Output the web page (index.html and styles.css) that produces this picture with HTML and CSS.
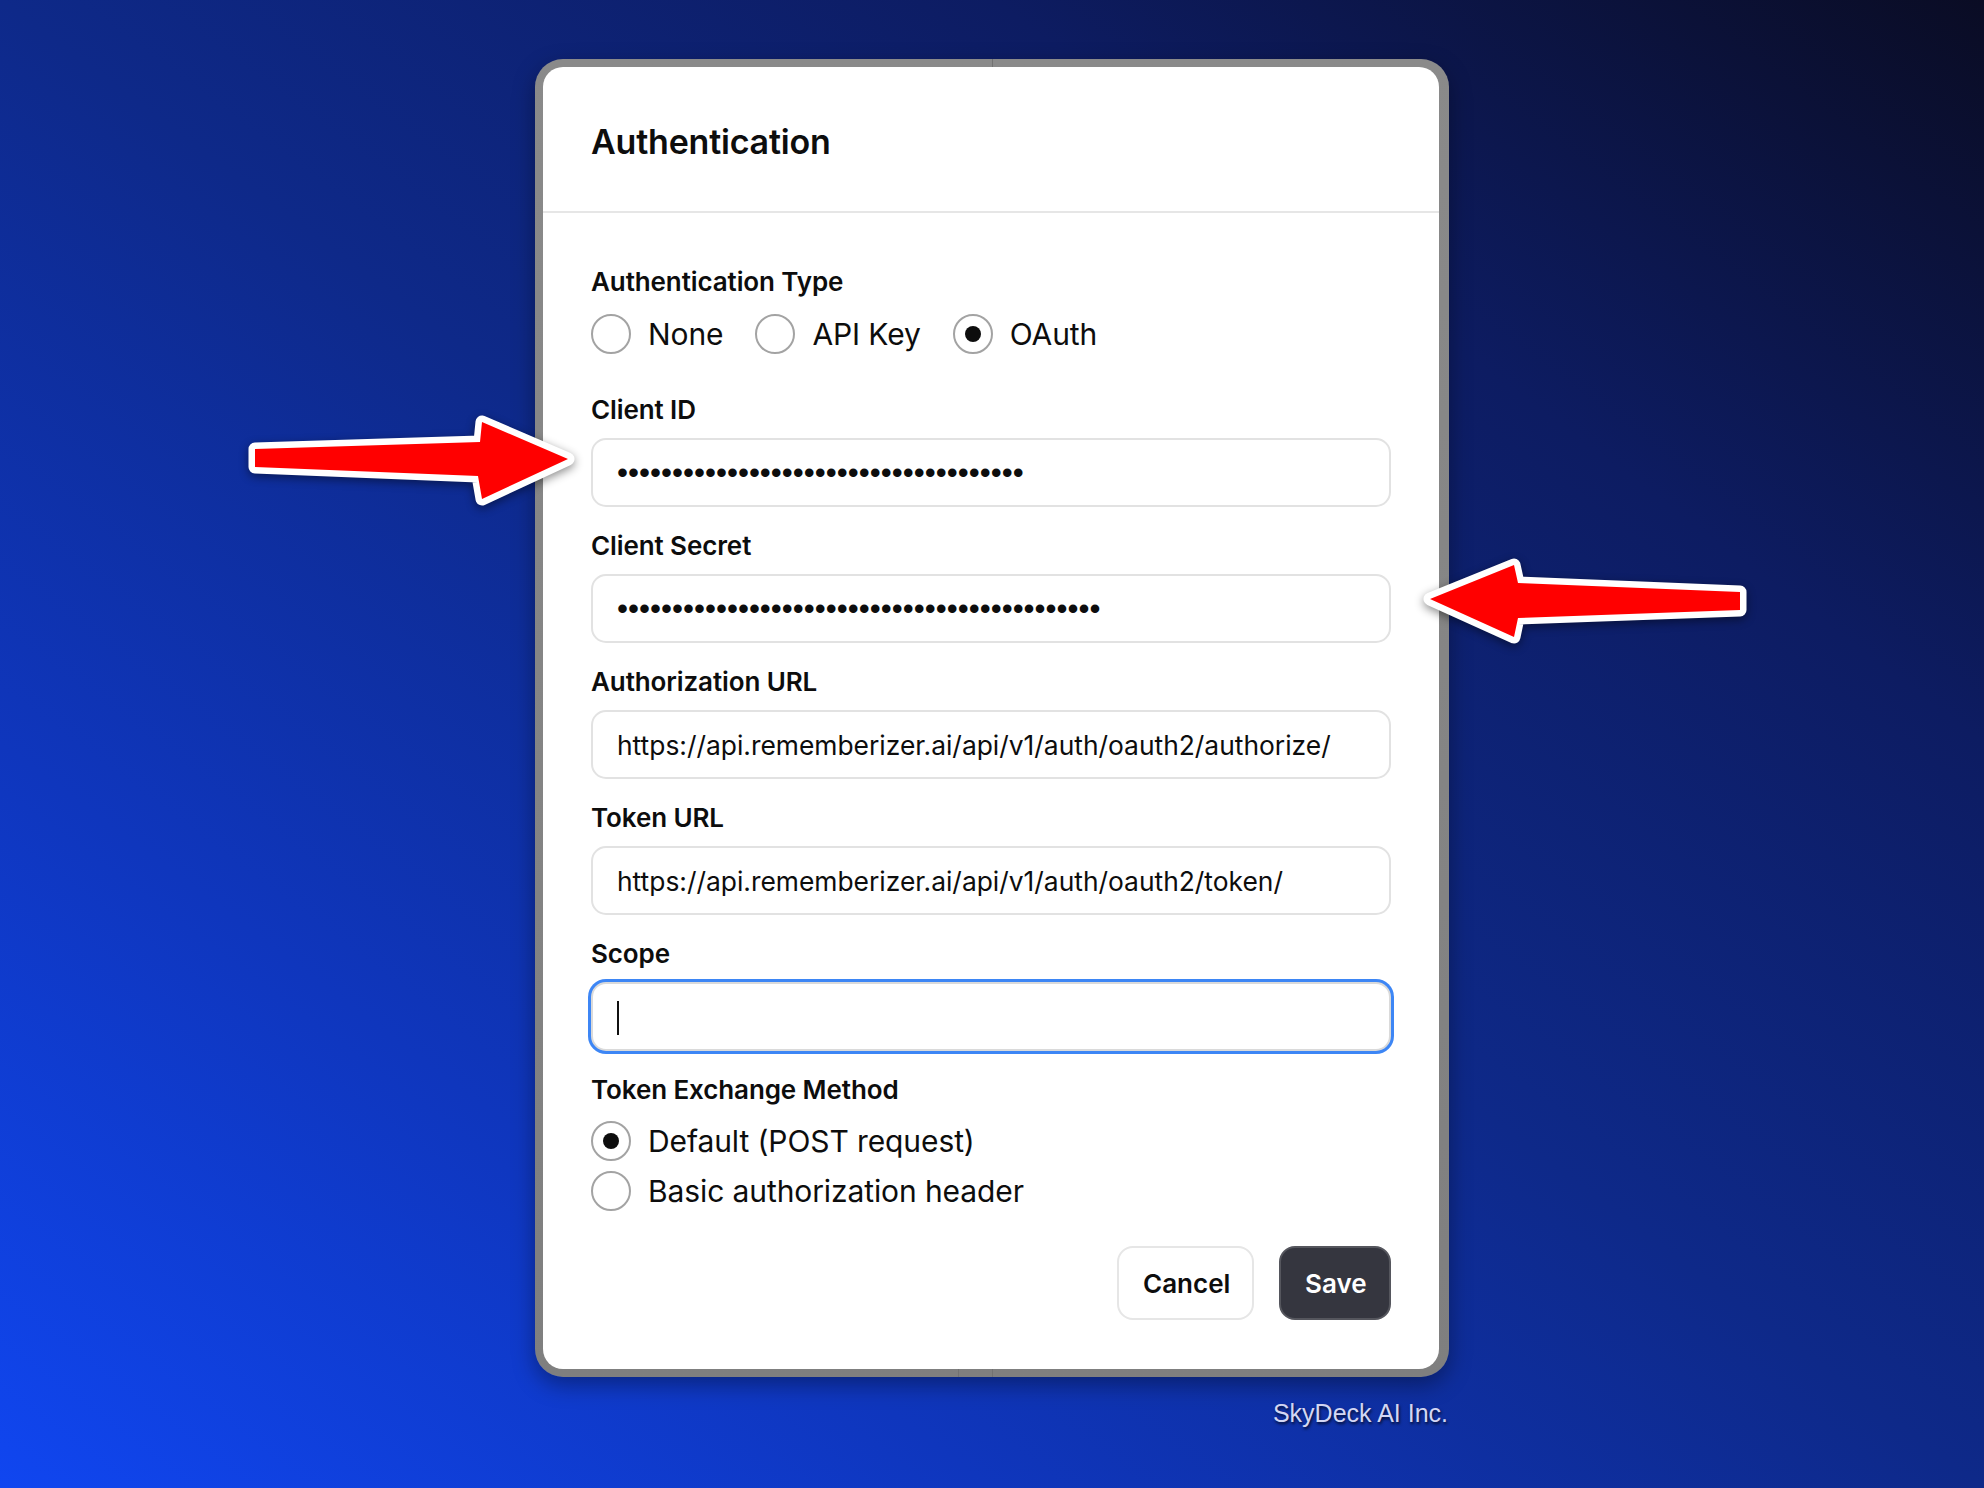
FILE: index.html
```html
<!DOCTYPE html>
<html lang="en">
<head>
<meta charset="utf-8">
<title>Authentication</title>
<link rel="stylesheet" href="styles.css">
</head>
<body>
<main class="stage">
  <div class="frame">
    <span class="seam seam-top"></span>
    <span class="seam seam-bottom-a"></span>
    <span class="seam seam-bottom-b"></span>
    <section class="dialog">
      <header class="dialog-header"><h1>Authentication</h1></header>
      <div class="dialog-body">
        <div class="group">
          <div class="label">Authentication Type</div>
          <div class="radio-row">
            <div class="radio"><span class="circle"></span><span class="radio-text">None</span></div>
            <div class="radio"><span class="circle"></span><span class="radio-text">API Key</span></div>
            <div class="radio"><span class="circle checked"></span><span class="radio-text">OAuth</span></div>
          </div>
        </div>

        <div class="group field-group first">
          <div class="label">Client ID</div>
          <div class="field"><span class="dots">•••••••••••••••••••••••••••••••••••••</span></div>
        </div>
        <div class="group field-group">
          <div class="label">Client Secret</div>
          <div class="field"><span class="dots">••••••••••••••••••••••••••••••••••••••••••••</span></div>
        </div>
        <div class="group field-group">
          <div class="label">Authorization URL</div>
          <div class="field"><span class="value">https://api.rememberizer.ai/api/v1/auth/oauth2/authorize/</span></div>
        </div>
        <div class="group field-group">
          <div class="label">Token URL</div>
          <div class="field"><span class="value">https://api.rememberizer.ai/api/v1/auth/oauth2/token/</span></div>
        </div>
        <div class="group field-group">
          <div class="label">Scope</div>
          <div class="field focused"><span class="caret"></span></div>
        </div>

        <div class="group field-group">
          <div class="label">Token Exchange Method</div>
          <div class="radio-col">
            <div class="radio"><span class="circle checked"></span><span class="radio-text">Default (POST request)</span></div>
            <div class="radio"><span class="circle"></span><span class="radio-text">Basic authorization header</span></div>
          </div>
        </div>

        <div class="actions">
          <button class="btn btn-cancel" type="button">Cancel</button>
          <button class="btn btn-save" type="button">Save</button>
        </div>
      </div>
    </section>
  </div>
  <footer class="brand">SkyDeck AI Inc.</footer>
</main>

<svg class="arrow arrow-left" width="345" height="100" viewBox="0 0 345 100" aria-hidden="true">
  <polygon points="15,39 240,32 242,12 328,49 242,89 238,66 15,57" />
</svg>
<svg class="arrow arrow-right" width="345" height="100" viewBox="0 0 345 100" aria-hidden="true">
  <polygon points="20,49 104,15 108,33 330,42 330,60 108,68 104,87" />
</svg>
</body>
</html>
```

FILE: styles.css
```css
* { box-sizing: border-box; }

html, body {
  margin: 0;
  padding: 0;
}

body {
  width: 1984px;
  height: 1488px;
  overflow: hidden;
  position: relative;
  font-family: "Inter", "Noto Sans", sans-serif;
  color: #0d0d0d;
  background: linear-gradient(to bottom left, #0a0c24 0%, #0d1c62 25%, #0e2989 50%, #0f36bd 75%, #1046f0 100%);
}

.stage {
  display: flex;
  flex-direction: column;
  align-items: center;
  padding-top: 59px;
}

.frame {
  position: relative;
  width: 914px;
  padding: 8px 10px 8px 8px;
  border-radius: 28px;
  background: linear-gradient(to bottom, #8a8a8a, #7f7f7f);
  box-shadow: 0 8px 22px rgba(0, 0, 0, 0.35);
}

.seam {
  position: absolute;
  width: 1px;
  background: #727272;
}

.seam-top {
  left: 457px;
  top: 0;
  height: 8px;
}

.seam-bottom-a {
  left: 423px;
  bottom: 0;
  height: 8px;
}

.seam-bottom-b {
  left: 457px;
  bottom: 0;
  height: 8px;
}

.dialog {
  background: #ffffff;
  border-radius: 20px;
  overflow: hidden;
}

.dialog-header {
  height: 146px;
  display: flex;
  align-items: center;
  padding: 4px 48px 0;
  border-bottom: 2px solid #e6e6e6;
}

.dialog-header h1 {
  margin: 0;
  font-size: 34px;
  font-weight: 600;
  letter-spacing: -0.2px;
}

.dialog-body {
  padding: 53px 48px 49px 48px;
  display: flex;
  flex-direction: column;
}

.label {
  font-size: 26px;
  font-weight: 600;
  line-height: 32px;
  height: 32px;
  letter-spacing: -0.1px;
}

.radio-row {
  display: flex;
  align-items: center;
  gap: 32px;
  margin-top: 16px;
}

.radio-col {
  display: flex;
  flex-direction: column;
  gap: 10px;
  margin-top: 15px;
}

.radio {
  display: flex;
  align-items: center;
  gap: 17px;
  height: 40px;
}

.circle {
  width: 40px;
  height: 40px;
  border-radius: 50%;
  border: 2px solid #a3a3a3;
  background: #fff;
  display: flex;
  align-items: center;
  justify-content: center;
  flex: none;
}

.circle.checked::after {
  content: "";
  width: 16px;
  height: 16px;
  border-radius: 50%;
  background: #0d0d0d;
}

.radio-text {
  font-size: 30px;
  font-weight: 400;
  line-height: 40px;
  letter-spacing: -0.1px;
}

.field-group {
  margin-top: 23px;
}

.field-group.first {
  margin-top: 40px;
}

.field-group .label {
  margin-bottom: 12px;
}

.field {
  height: 69px;
  border: 2px solid #e2e2e2;
  border-radius: 15px;
  display: flex;
  align-items: center;
  padding: 0 24px;
  background: #fff;
}

.field.focused {
  border-color: #dadada;
  box-shadow: 0 0 0 3px #3d86f5;
}

.dots {
  font-family: "Liberation Sans", Arial, sans-serif;
  font-size: 31.4px;
  letter-spacing: 0;
  line-height: 1;
  color: #0d0d0d;
}

.value {
  font-size: 26.4px;
  font-weight: 400;
  white-space: nowrap;
}

.caret {
  width: 2px;
  height: 34px;
  background: #111;
  margin-top: 2px;
}

.actions {
  display: flex;
  justify-content: flex-end;
  gap: 25px;
  margin-top: 35px;
}

.btn {
  height: 74px;
  padding: 0 24px;
  border-radius: 16px;
  font-family: "Inter", "Noto Sans", sans-serif;
  font-size: 26px;
  font-weight: 600;
  cursor: pointer;
}

.btn-cancel {
  background: #fff;
  color: #0d0d0d;
  border: 2px solid #e6e6e6;
  width: 137px;
}

.btn-save {
  background: #35363f;
  color: #fff;
  border: 2px solid #55565d;
  width: 112px;
}

.brand {
  width: 914px;
  text-align: right;
  margin-top: 21px;
  padding-right: 1px;
  font-family: "Liberation Sans", Arial, sans-serif;
  font-size: 25px;
  line-height: 30px;
  color: #d3d7f4;
  text-shadow: 1px 2px 3px rgba(0, 0, 0, 0.75);
}

.arrow {
  position: absolute;
  overflow: visible;
  filter: drop-shadow(0 3px 5px rgba(0, 0, 0, 0.45));
}

.arrow polygon {
  fill: #ff0000;
  stroke: #ffffff;
  stroke-width: 13;
  stroke-linejoin: round;
  paint-order: stroke;
}

.arrow-left {
  left: 240px;
  top: 410px;
}

.arrow-right {
  left: 1410px;
  top: 550px;
}
```
